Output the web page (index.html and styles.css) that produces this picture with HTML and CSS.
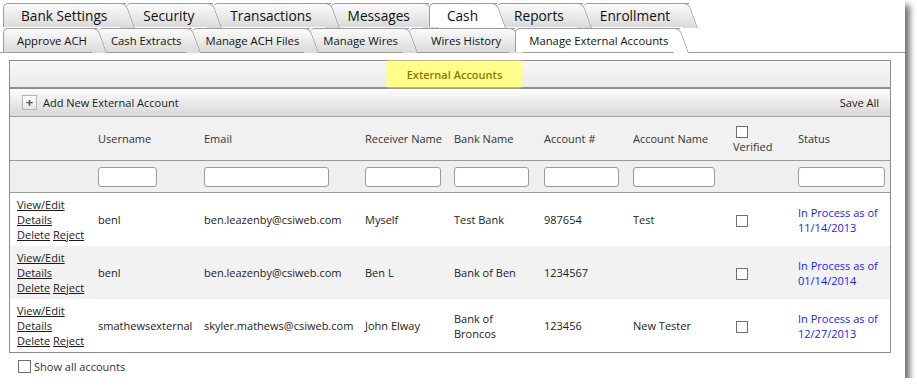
FILE: index.html
```html
<!DOCTYPE html>
<html lang="en">
<head>
    <meta charset="UTF-8">
    <title>Manage External Accounts</title>
    <link rel="stylesheet" href="styles.css">
</head>
<body>
    <div class="window">
        <div class="tabs">
            <div class="tab">Bank Settings</div>
            <div class="tab">Security</div>
            <div class="tab">Transactions</div>
            <div class="tab">Messages</div>
            <div class="tab active">Cash</div>
            <div class="tab">Reports</div>
            <div class="tab">Enrollment</div>
        </div>
        <div class="tabs subtabs">
            <div class="tab">Approve ACH</div>
            <div class="tab">Cash Extracts</div>
            <div class="tab">Manage ACH Files</div>
            <div class="tab">Manage Wires</div>
            <div class="tab wide">Wires History</div>
            <div class="tab active">Manage External Accounts</div>
        </div>

        <div class="panel">
            <div class="panel-title"><span class="highlight">External Accounts</span></div>
            <div class="toolbar">
                <div class="add"><span class="plus">+</span>Add New External Account</div>
                <div>Save All</div>
            </div>
            <table class="grid">
                <colgroup>
                    <col class="w-actions">
                    <col class="w-user">
                    <col class="w-email">
                    <col class="w-receiver">
                    <col class="w-bank">
                    <col class="w-acct">
                    <col class="w-acctname">
                    <col class="w-verified">
                    <col class="w-status">
                </colgroup>
                <thead>
                    <tr class="head">
                        <th></th>
                        <th>Username</th>
                        <th>Email</th>
                        <th>Receiver Name</th>
                        <th>Bank Name</th>
                        <th>Account #</th>
                        <th>Account Name</th>
                        <th class="verified-head"><input type="checkbox" class="box"><br>Verified</th>
                        <th>Status</th>
                    </tr>
                    <tr class="filters">
                        <td></td>
                        <td><input type="text" class="filter f-user"></td>
                        <td><input type="text" class="filter f-email"></td>
                        <td><input type="text" class="filter f-receiver"></td>
                        <td><input type="text" class="filter f-bank"></td>
                        <td><input type="text" class="filter f-acct"></td>
                        <td><input type="text" class="filter f-acctname"></td>
                        <td></td>
                        <td><input type="text" class="filter f-status"></td>
                    </tr>
                </thead>
                <tbody>
                    <tr>
                        <td class="actions"><a href="#">View/Edit</a><br><a href="#">Details</a><br><a href="#">Delete</a> <a href="#">Reject</a></td>
                        <td>benl</td>
                        <td>ben.leazenby@csiweb.com</td>
                        <td>Myself</td>
                        <td>Test Bank</td>
                        <td>987654</td>
                        <td>Test</td>
                        <td><input type="checkbox" class="box"></td>
                        <td class="status">In Process as of<br>11/14/2013</td>
                    </tr>
                    <tr class="alt">
                        <td class="actions"><a href="#">View/Edit</a><br><a href="#">Details</a><br><a href="#">Delete</a> <a href="#">Reject</a></td>
                        <td>benl</td>
                        <td>ben.leazenby@csiweb.com</td>
                        <td>Ben L</td>
                        <td>Bank of Ben</td>
                        <td>1234567</td>
                        <td></td>
                        <td><input type="checkbox" class="box"></td>
                        <td class="status">In Process as of<br>01/14/2014</td>
                    </tr>
                    <tr>
                        <td class="actions"><a href="#">View/Edit</a><br><a href="#">Details</a><br><a href="#">Delete</a> <a href="#">Reject</a></td>
                        <td>smathewsexternal</td>
                        <td>skyler.mathews@csiweb.com</td>
                        <td>John Elway</td>
                        <td>Bank of<br>Broncos</td>
                        <td>123456</td>
                        <td>New Tester</td>
                        <td><input type="checkbox" class="box"></td>
                        <td class="status">In Process as of<br>12/27/2013</td>
                    </tr>
                </tbody>
            </table>
        </div>

        <label class="show-all"><input type="checkbox" class="box">Show all accounts</label>
    </div>
</body>
</html>
```

FILE: styles.css
```css
body {
    margin: 0;
    background-color: #ffffff;
    font-family: "Open Sans", "Noto Sans", sans-serif;
    font-size: 11px;
    color: #222222;
}

.window {
    width: 905px;
    height: 378px;
    background-color: #ffffff;
    box-shadow: 5px 5px 6px rgba(0, 0, 0, 0.55);
    overflow: hidden;
}

/* tab strips */
.tabs {
    display: flex;
    padding: 3px 0 0 3px;
}

.tab {
    position: relative;
    height: 23px;
    line-height: 23px;
    padding: 0 19px 0 17px;
    border-top: 1px solid #9c9c9c;
    border-top-left-radius: 5px;
    background: linear-gradient(#fbfbfb, #dadada);
    font-size: 13.7px;
    color: #111111;
    white-space: nowrap;
}

.tab:first-child,
.tab.active {
    border-left: 1px solid #9c9c9c;
}

.tab::after {
    content: "";
    position: absolute;
    top: -1px;
    right: 0;
    width: 14px;
    height: calc(100% + 1px);
    border-top: 1px solid #9c9c9c;
    border-right: 1px solid #9c9c9c;
    border-top-right-radius: 6px;
    background: inherit;
    transform: skewX(20deg);
    transform-origin: top left;
    z-index: 1;
}

.tab.active {
    background: #ffffff;
    z-index: 2;
}

.subtabs {
    padding-top: 1px;
    border-bottom: 1px solid #9c9c9c;
}

.subtabs .tab {
    padding: 0 11px 0 13px;
    font-size: 11.3px;
}

.subtabs .tab.wide {
    padding: 0 14px 0 22px;
}

/* panel */
.panel {
    margin: 7px 14px 0 9px;
    border: 1px solid #8c8c8c;
}

.panel-title {
    height: 26px;
    display: flex;
    justify-content: center;
    background: linear-gradient(#f8f8f8, #ebebeb);
    border-bottom: 2px solid #8c8c8c;
}

.highlight {
    display: flex;
    align-items: center;
    justify-content: center;
    width: 135px;
    margin-left: 9px;
    background-color: #ffff8a;
    box-shadow: 0 0 3px #ffff70;
    color: #8a7c00;
    font-weight: 600;
}

.toolbar {
    height: 27px;
    display: flex;
    align-items: center;
    justify-content: space-between;
    padding: 0 11px 0 12px;
    background: linear-gradient(#fcfcfc, #d7d7d7);
    border-bottom: 1px solid #a0a0a0;
    color: #1a1a1a;
}

.add {
    display: flex;
    align-items: center;
}

.plus {
    width: 13px;
    height: 13px;
    margin-right: 6px;
    border: 1px solid #b4b4b4;
    background: linear-gradient(#ffffff, #e6e6e6);
    font-size: 13px;
    font-weight: 700;
    line-height: 12px;
    text-align: center;
    color: #555555;
}

/* grid */
.grid {
    width: 100%;
    border-collapse: collapse;
    table-layout: fixed;
}

.w-actions { width: 81px; }
.w-user { width: 106px; }
.w-email { width: 161px; }
.w-receiver { width: 89px; }
.w-bank { width: 90px; }
.w-acct { width: 89px; }
.w-acctname { width: 100px; }
.w-verified { width: 65px; }
.w-status { width: 99px; }

.grid th,
.grid td {
    padding: 3px 7px;
    text-align: left;
    vertical-align: middle;
    line-height: 16px;
    white-space: nowrap;
}

.head th {
    height: 37px;
    padding-top: 3px;
    padding-bottom: 3px;
    background-color: #f1f1f1;
    border-bottom: 1px solid #9a9a9a;
    font-weight: normal;
    color: #333333;
}

.verified-head {
    line-height: 14px;
}

.filters td {
    height: 25px;
    background-color: #efefef;
    border-bottom: 1px solid #9a9a9a;
}

.filter {
    display: block;
    height: 20px;
    box-sizing: border-box;
    border: 1px solid #9a9a9a;
    border-radius: 3px;
    background-color: #ffffff;
}

.f-user { width: 59px; }
.f-email { width: 125px; }
.f-receiver { width: 76px; }
.f-bank { width: 75px; }
.f-acct { width: 75px; }
.f-acctname { width: 82px; }
.f-status { width: 87px; }

.grid tbody td {
    height: 45px;
    padding-top: 4px;
    padding-bottom: 4px;
    line-height: 15px;
}

.grid tbody tr.alt {
    background-color: #f2f2f2;
}

.actions a {
    color: #1a1a1a;
}

.status {
    color: #1c1cf2;
}

.box {
    -webkit-appearance: none;
    appearance: none;
    width: 12px;
    height: 12px;
    margin: 0 0 0 3px;
    border: 1px solid #6e6e6e;
    background-color: #ffffff;
    vertical-align: middle;
}

.show-all {
    display: flex;
    align-items: center;
    margin: 6px 0 0 15px;
    color: #333333;
}

.show-all .box {
    width: 13px;
    height: 13px;
    margin-right: 3px;
}
```
